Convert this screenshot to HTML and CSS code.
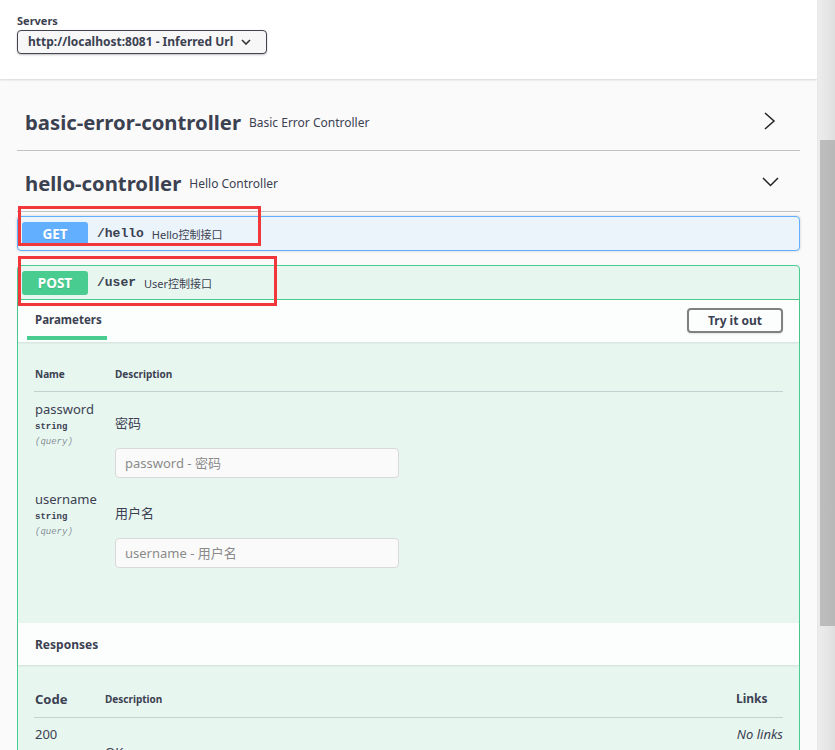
FILE: index.html
```html
<!DOCTYPE html>
<html>
<head>
<meta charset="utf-8">
<link rel="stylesheet" href="styles.css">
</head>
<body>
<div class="frame">
  <div class="main">
    <div class="scheme">
      <div class="servers-label">Servers</div>
      <div class="select">
        <span>http://localhost:8081 - Inferred Url</span>
        <svg class="select-arrow" width="10" height="6" viewBox="0 0 10 6"><path d="M1 1 L5 5 L9 1" fill="none" stroke="#333" stroke-width="1.6"/></svg>
      </div>
    </div>
    <div class="wrapper">
      <div class="tag">
        <span class="tag-name">basic-error-controller</span>
        <span class="tag-desc">Basic Error Controller</span>
        <svg class="tag-arrow" width="22" height="20" viewBox="0 0 22 20"><path d="M7 2 L16 10 L7 18" fill="none" stroke="#222" stroke-width="1.5"/></svg>
      </div>
      <div class="tag">
        <span class="tag-name">hello-controller</span>
        <span class="tag-desc">Hello Controller</span>
        <svg class="tag-arrow" width="22" height="20" viewBox="0 0 22 20"><path d="M5 6 L12.5 13.5 L20 6" fill="none" stroke="#222" stroke-width="1.5"/></svg>
      </div>
      <div class="opblock get">
        <div class="summary">
          <span class="method">GET</span>
          <span class="path">/hello</span>
          <span class="op-desc">Hello控制接口</span>
        </div>
      </div>
      <div class="opblock post">
        <div class="summary">
          <span class="method">POST</span>
          <span class="path">/user</span>
          <span class="op-desc">User控制接口</span>
        </div>
        <div class="section-head">
          <div class="tab">Parameters</div>
          <button class="try">Try it out</button>
        </div>
        <div class="section-body params">
          <div class="thead">
            <div class="col-name">Name</div>
            <div class="col-desc">Description</div>
          </div>
          <div class="prow">
            <div class="col-name">
              <div class="pname">password</div>
              <div class="ptype">string</div>
              <div class="pin">(query)</div>
            </div>
            <div class="col-desc">
              <div class="pdesc">密码</div>
              <input class="pinput" placeholder="password - 密码">
            </div>
          </div>
          <div class="prow">
            <div class="col-name">
              <div class="pname">username</div>
              <div class="ptype">string</div>
              <div class="pin">(query)</div>
            </div>
            <div class="col-desc">
              <div class="pdesc">用户名</div>
              <input class="pinput" placeholder="username - 用户名">
            </div>
          </div>
        </div>
        <div class="section-head resp-head">
          <div class="resp-title">Responses</div>
        </div>
        <div class="section-body responses">
          <div class="rhead">
            <div class="rcode hcode">Code</div>
            <div class="rdesc hdesc">Description</div>
            <div class="rlinks hlinks">Links</div>
          </div>
          <div class="rrow">
            <div class="rcode">200</div>
            <div class="rdesc okdesc">OK</div>
            <div class="rlinks nolinks">No links</div>
          </div>
        </div>
      </div>
    </div>
    <div class="mark mark-get"></div>
    <div class="mark mark-post"></div>
  </div>
  <div class="scrollbar"><div class="thumb"></div></div>
</div>
</body>
</html>
```
FILE: styles.css
```css
html, body { margin: 0; padding: 0; height: 750px; overflow: hidden; }
body {
  font-family: "Noto Sans", "Noto Sans CJK SC", sans-serif;
  color: #3b4151;
  background: #fafafa;
}
.frame { display: flex; height: 750px; }
.main { position: relative; width: 817px; height: 750px; overflow: hidden; background: #fafafa; }
.scrollbar {
  width: 18px; height: 750px;
  background: linear-gradient(to right, #ececec, #e6e6e6 60%, #dedede);
  border-left: 1px solid #e8e8e8;
  box-sizing: border-box;
  padding-top: 140px; padding-left: 2px;
}
.thumb { height: 486px; background: linear-gradient(to right, #bdbdbd, #b8b8b8); }

.scheme {
  background: #fff;
  height: 79px;
  box-sizing: border-box;
  padding: 14px 17px 0;
  box-shadow: 0 1px 2px 0 rgba(0,0,0,.15);
}
.servers-label { font-size: 11px; font-weight: 700; line-height: 14px; margin-bottom: 1px; }
.select {
  display: inline-flex; align-items: center; justify-content: space-between;
  height: 24px; box-sizing: border-box;
  width: 250px;
  padding: 0 15px 0 10px;
  border: 1px solid #41444e; border-radius: 4px;
  background: #f7f7f7;
  box-shadow: 0 1px 2px 0 rgba(0,0,0,.25);
  font-size: 12px; font-weight: 700; color: #3b4151;
  white-space: nowrap;
}
.select-arrow { margin-top: 1px; flex: none; }

.wrapper { padding: 11px 17px 0; }
.tag {
  display: flex; align-items: center;
  height: 61px; box-sizing: border-box;
  padding: 3px 20px 0 8px;
  border-bottom: 1px solid rgba(59,65,81,.3);
}
.tag-name { font-size: 20.3px; font-weight: 700; }
.tag-desc { font-size: 12px; margin-left: 8px; margin-top: 1px; }
.tag-arrow { margin-left: auto; margin-top: -1px; }

.opblock { border-radius: 4px; border: 1px solid; box-sizing: border-box; margin-bottom: 14px; }
.get { margin-top: 4px; background: #ebf3fb; border-color: #61affe; box-shadow: 0 0 3px rgba(0,0,0,.19); }
.post { background: #e8f6f0; border-color: #49cc90; border-radius: 4px 4px 0 0; }
.summary { display: flex; align-items: center; height: 33px; padding: 0 4px; box-sizing: border-box; }
.post .summary { border-bottom: 1px solid #49cc90; height: 34px; }
.method {
  width: 66px; height: 24px; border-radius: 3px;
  display: flex; align-items: center; justify-content: center;
  color: #fff; font-size: 13.5px; font-weight: 700;
  text-shadow: 0 1px 0 rgba(0,0,0,.1);
}
.get .method { background: #61affe; }
.post .method { background: #49cc90; }
.path { font-family: "Liberation Mono", monospace; font-weight: 700; font-size: 13px; margin-left: 9px; }
.op-desc { font-size: 11px; margin-left: 8px; }

.section-head {
  display: flex; align-items: center; justify-content: space-between;
  height: 42px; box-sizing: border-box;
  padding: 0 16px 0 9px;
  background: rgba(255,255,255,.85);
  box-shadow: 0 1px 2px rgba(0,0,0,.1);
  position: relative;
}
.tab {
  align-self: flex-start;
  font-size: 11.5px; font-weight: 700;
  height: 40px; box-sizing: border-box;
  padding: 12px 8px 0; width: 80px;
  border-bottom: 4px solid #49cc90;
}
.try {
  width: 96px; height: 25px;
  margin-top: -2px;
  border: 2px solid #808080; border-radius: 4px;
  background: transparent;
  font-family: inherit; font-size: 12px; font-weight: 700; color: #3b4151;
  box-shadow: 0 1px 2px rgba(0,0,0,.1);
}
.section-body { padding: 0 16px 0 16px; }
.params { padding-top: 25px; padding-bottom: 55px; }
.thead { display: flex; line-height: 14px; padding-bottom: 10px; border-bottom: 1px solid rgba(59,65,81,.2); }
.thead .col-name, .thead .col-desc { font-size: 10px; font-weight: 700; }
.col-name { width: 80px; padding-left: 1px; flex: none; }
.col-desc { flex: 1; }
.prow { display: flex; padding-top: 9px; }
.prow + .prow { padding-top: 13px; }
.pname { font-size: 13px; line-height: 17px; }
.ptype { font-family: "Liberation Mono", monospace; font-size: 9px; font-weight: 700; margin-top: 4px; line-height: 11px; }
.pin { font-family: "Liberation Mono", monospace; font-size: 9px; font-style: italic; color: rgba(59,65,81,.6); margin-top: 4px; line-height: 11px; }
.pdesc { font-size: 13px; margin-top: 14px; line-height: 16px; }
.pinput {
  display: block;
  width: 284px; height: 30px; box-sizing: border-box;
  margin-top: 17px;
  border: 1px solid #d9d9d9; border-radius: 4px;
  background: #fafafa;
  padding: 0 9px;
  font-family: inherit; font-size: 13px; color: #3b4151;
}
.pinput::placeholder { color: #8a8a8a; }
.resp-head { padding-left: 17px; }
.resp-title { font-size: 12px; font-weight: 700; }
.responses { padding-top: 23px; }
.rhead { display: flex; align-items: center; line-height: 22px; padding-bottom: 7px; border-bottom: 1px solid rgba(59,65,81,.2); }
.rrow { display: flex; padding-top: 8px; line-height: 17px; }
.rcode { width: 70px; padding-left: 1px; font-size: 13px; }
.rdesc { flex: 1; font-size: 13px; }
.rlinks { width: 60px; text-align: right; font-size: 13px; }
.hcode { font-weight: 700; font-size: 13px; }
.hdesc { font-weight: 700; font-size: 10px; }
.hlinks { font-weight: 700; font-size: 12px; text-align: left; padding-left: 13px; box-sizing: border-box; }
.okdesc { padding-top: 18px; }
.nolinks { font-style: italic; }

.mark { position: absolute; border: 3px solid #f2373b; box-sizing: border-box; }
.mark-get { left: 18px; top: 206px; width: 243px; height: 40px; }
.mark-post { left: 18px; top: 256px; width: 259px; height: 50px; }
```
